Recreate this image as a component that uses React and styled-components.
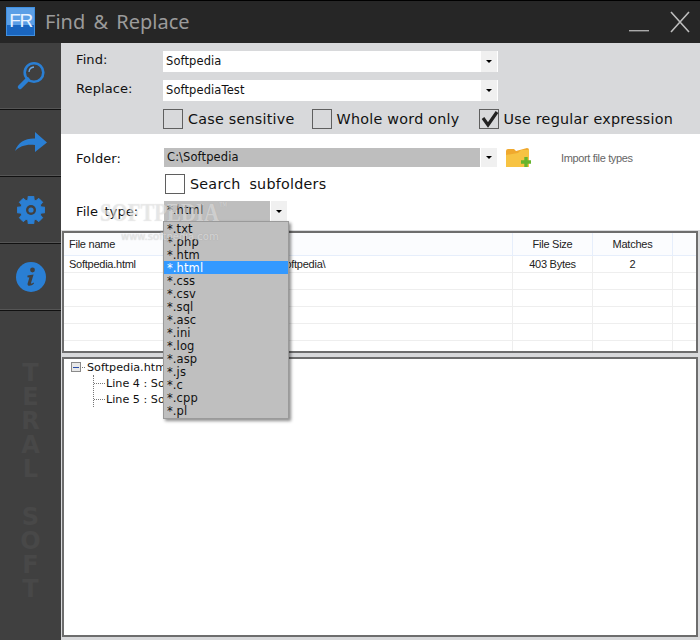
import React from "react";
import styled, { createGlobalStyle } from "styled-components";

const Global = createGlobalStyle`
  html, body { margin: 0; padding: 0; background: #fff; }
  * { box-sizing: border-box; }
`;
const UI = `"DejaVu Sans", Verdana, sans-serif`;
const Win = styled.div`
  position: relative; width: 700px; height: 640px; overflow: hidden;
  display: flex; flex-direction: column; background: #fff; font-family: ${UI}; color: #111;
`;
const TitleBar = styled.header`
  height: 43px; flex: none; background: #262626; border-top: 1px solid #000;
  display: flex; align-items: center; padding: 0 0 1px 6px;
`;
const Logo = styled.div`
  width: 29px; height: 29px; border: 1px solid #3f8fe0; overflow: hidden;
  background: linear-gradient(#5b9fe6 0 62%, #1a66c0 62% 100%);
  color: #e8f2ff; font: 400 19px/25px "Liberation Sans", sans-serif; text-align: center; letter-spacing: -1.5px;
`;
const Title = styled.h1`
  margin: 0 0 0 10px; flex: 1; color: #9b9b9b; font: 400 20px "Noto Sans", sans-serif; word-spacing: 3px;
`;
const WinBtn = styled.button`
  border: 0; background: none; padding: 0; display: block; width: ${p => p.$w}px; height: 24px; margin-right: ${p => p.$mr}px;
  svg { display: block; }
`;
const Body = styled.div`flex: 1; display: flex; min-height: 0;`;
const Sidebar = styled.nav`
  width: 61px; flex: none; background: #404040; display: flex; flex-direction: column; align-items: stretch;
`;
const NavItem = styled.div`
  height: 67px; flex: none; display: flex; align-items: center; justify-content: center;
  border-bottom: 1px solid #111; box-shadow: inset 0 -1px 0 #555;
`;
const Brand = styled.div`
  margin-top: 50px; display: flex; flex-direction: column; align-items: center;
`;
const BrandLetter = styled.span`
  display: block; height: 24px; font: 700 24px/24px "DejaVu Sans", sans-serif; color: #484848;
`;
const Main = styled.main`flex: 1; min-width: 0; display: flex; flex-direction: column;`;
const SearchPanel = styled.section`
  height: 91px; flex: none; background: #d8d9db; padding: 8px 0 0 15px; display: flex; flex-direction: column;
`;
const FieldRow = styled.div`
  display: flex; align-items: center; height: ${p => p.$h || 21}px; margin-bottom: ${p => p.$mb || 0}px;
  margin-left: ${p => p.$ml || 0}px; margin-top: ${p => p.$mt || 0}px;
`;
const Label = styled.label`width: ${p => p.$w || 87}px; flex: none; font-size: 13px; letter-spacing: .1px; word-spacing: 2px; position: relative; top: ${p => p.$top ?? -2}px;`;
const Combo = styled.div`
  width: ${p => p.$w}px; height: ${p => p.$h || 21}px; display: flex; align-items: stretch; flex: none;
  background: ${p => p.$gray ? "transparent" : "#fff"};
`;
const ComboValue = styled.div`
  flex: 1; min-width: 0; padding: 0 3px; font-size: 11.5px; line-height: ${p => p.$lh || 21}px;
  background: ${p => p.$gray ? "#bebebe" : "#fff"}; letter-spacing: 0.1px;
`;
const ComboArrow = styled.div`
  width: 17px; margin-left: ${p => p.$gray ? 1 : 0}px; background: #f0f0f0; border-right: 1px solid #fff;
  display: flex; align-items: center; justify-content: center;
  &::after { content: ""; border: 3px solid transparent; border-top: 3px solid #000; border-bottom: 0; }
`;
const Checks = styled.div`display: flex; align-items: center; height: 20px; margin: 8px 0 0 87px;`;
const Check = styled.span`
  width: 20px; height: 20px; flex: none; border: 1px solid #5f5f5f; margin-right: 5px; position: relative; display: block;
  svg { position: absolute; left: -1px; top: -1px; }
`;
const CheckText = styled.span`font-size: 14.3px; letter-spacing: .25px; margin-right: ${p => p.$mr || 0}px; white-space: nowrap; word-spacing: ${p => p.$ws || 0}px;`;
const FolderPanel = styled.section`height: 96px; flex: none; padding: 14px 0 0 15px; display: flex; flex-direction: column;`;
const ImportLink = styled.span`
  margin-left: 29px; font: 400 11px "Liberation Sans", sans-serif; color: #666; letter-spacing: -.35px;
`;
const FolderIcon = styled.svg`margin-left: 7px; flex: none;`;
const ListArea = styled.div`
  flex: 1; min-height: 0; background: #d8d9db; padding: 1px 2px 3px 1px; display: flex; flex-direction: column; gap: 4px;
`;
const Results = styled.section`
  height: 122px; flex: none; background: #fff; border: 2px solid #6d6d6d; overflow: hidden;
  font: 400 11px "Liberation Sans", sans-serif; color: #222; letter-spacing: -.25px;
`;
const Row = styled.div`
  display: grid; grid-template-columns: 160px 289px 80px 80px 1fr; height: ${p => p.$h || 17}px;
  border-bottom: 1px solid ${p => p.$head ? "#e6eefb" : "#eeeeee"};
  background: ${p => p.$head ? "#fbfcfe" : "#fff"};
`;
const Cell = styled.div`
  border-right: 1px solid ${p => p.$head ? "#e6eefb" : "#eeeeee"}; padding: 0 0 0 ${p => p.$pl || 0}px; white-space: nowrap; overflow: hidden;
  line-height: ${p => p.$h || 16}px; text-align: ${p => p.$center ? "center" : "left"};
  &:last-child { border-right: 0; }
`;
const Tree = styled.section`
  flex: 1; min-height: 0; background: #fff; border: 2px solid #6d6d6d;
  padding: 0 0 0 7px; font-size: 11.2px;
`;
const TreeRoot = styled.div`display: flex; align-items: center; height: 16px;`;
const Expander = styled.span`
  width: 10px; height: 10px; border: 1px solid #8a8a8a; background: #e8e8e8; flex: none; display: flex; align-items: center; justify-content: center;
  &::after { content: ""; width: 6px; height: 1px; background: #2b4fa8; }
`;
const TreeDots = styled.span`width: 3px; border-top: 1px dotted #777; margin: 0 2px 0 1px;`;
const TreeChildren = styled.div`margin-left: 22px; border-left: 1px dotted #777; height: 32px;`;
const TreeChild = styled.div`
  display: flex; align-items: center; height: 16px; white-space: pre;
  &::before { content: ""; width: 11px; margin-right: 1px; border-top: 1px dotted #777; }
`;
const Dropdown = styled.ul`
  position: absolute; left: 163px; top: 221px; width: 126px; height: 198px; margin: 0; padding: 0; list-style: none;
  background: #bfbfbf; border: 1px solid #9a9a9a; box-shadow: 2px 2px 3px rgba(0,0,0,.45); z-index: 5;
`;
const DropItem = styled.li`
  height: 13px; line-height: 15px; padding-left: 3px; font-size: 11.5px; letter-spacing: .1px;
  background: ${p => p.$on ? "#3399ff" : "transparent"}; color: ${p => p.$on ? "#fff" : "#111"};
`;
const Mark = styled.div`
  position: absolute; left: 100px; top: 198px; z-index: 6; font: 700 26px "Liberation Serif", serif;
  color: rgba(255,255,255,.42); text-shadow: 0 0 1px rgba(150,150,150,.4); white-space: nowrap; pointer-events: none;
  transform: scaleX(.8); transform-origin: left center;
`;
const MarkTm = styled.span`font-size: 10px; vertical-align: 12px; font-weight: 400;`;
const MarkUrl = styled.div`
  position: absolute; left: 121px; top: 231px; z-index: 6; font: 400 10px "DejaVu Sans", sans-serif;
  color: rgba(255,255,255,.5); text-shadow: 0 0 1px rgba(130,130,130,.5); white-space: nowrap; pointer-events: none;
`;

const Blue = "#2a7fd4";
const Search = () => (
  <svg width="30" height="30" viewBox="0 0 30 30" fill="none">
    <circle cx="18" cy="11.5" r="9.3" stroke={Blue} strokeWidth="2.6" />
    <path d="M11.5 18.5 L4 26" stroke={Blue} strokeWidth="4.5" strokeLinecap="round" />
    <path d="M13 11a5.5 5.5 0 0 1 5-5" stroke="#6aa9e6" strokeWidth="1.3" />
  </svg>
);
const Arrow = () => (
  <svg width="34" height="24" viewBox="0 0 34 24">
    <path d="M1 20 C4 11 12 7 21 7.5 L21 1 L33 11.5 L21 21 L21 14 C12 13 6 15 1 20Z" fill={Blue} />
  </svg>
);
const gearPath = (() => {
  const pts = [];
  for (let i = 0; i < 8; i++) {
    const a = (i * Math.PI) / 4;
    [[-0.3, 10.5], [-0.2, 14], [0.2, 14], [0.3, 10.5]].forEach(([d, r]) =>
      pts.push(`${(14 + r * Math.sin(a + d)).toFixed(2)} ${(14 - r * Math.cos(a + d)).toFixed(2)}`));
  }
  return "M" + pts.join(" L") + "Z";
})();
const Gear = () => (
  <svg width="28" height="28" viewBox="0 0 28 28">
    <path d={gearPath} fill={Blue} stroke={Blue} strokeLinejoin="round" />
    <circle cx="14" cy="14" r="5" fill="#404040" />
    <circle cx="14" cy="14" r="2.6" fill={Blue} />
  </svg>
);
const Info = () => (
  <svg width="30" height="30" viewBox="0 0 30 30">
    <circle cx="15" cy="15" r="15" fill={Blue} />
    <circle cx="16.5" cy="8" r="2.4" fill="#404040" />
    <path d="M11.5 13.5 L17.6 12.5 L15 21 C14.8 22 15.5 22 17.5 20.5 L18 21.5 C15.5 24 11 25 11.6 21.5 L13.4 15.5 L11.4 15.2Z" fill="#404040" />
  </svg>
);
const types = ["txt","php","htm","html","css","csv","sql","asc","ini","log","asp","js","c","cpp","pl"];
const brand = ["T","E","R","A","L","\u00a0","S","O","F","T"];

export default function App() {
  return (
    <Win>
      <Global />
      <TitleBar>
        <Logo>FR</Logo>
        <Title>Find &amp; Replace</Title>
        <WinBtn $w={20} $mr={21} aria-label="Minimize">
          <svg width="20" height="24"><rect x="0" y="20" width="20" height="1.4" fill="#aaa" /></svg>
        </WinBtn>
        <WinBtn $w={20} $mr={10} aria-label="Close">
          <svg width="20" height="24"><path d="M1 2 L19 22 M19 2 L1 22" stroke="#bdbdbd" strokeWidth="1.6" /></svg>
        </WinBtn>
      </TitleBar>
      <Body>
        <Sidebar>
          <NavItem><Search /></NavItem>
          <NavItem><Arrow /></NavItem>
          <NavItem><Gear /></NavItem>
          <NavItem><Info /></NavItem>
          <Brand>{brand.map((c, i) => <BrandLetter key={i}>{c}</BrandLetter>)}</Brand>
        </Sidebar>
        <Main>
          <SearchPanel>
            <FieldRow $mb={8}>
              <Label>Find:</Label>
              <Combo $w={335}><ComboValue>Softpedia</ComboValue><ComboArrow /></Combo>
            </FieldRow>
            <FieldRow>
              <Label>Replace:</Label>
              <Combo $w={335}><ComboValue>SoftpediaTest</ComboValue><ComboArrow /></Combo>
            </FieldRow>
            <Checks>
              <Check /><CheckText $mr={17}>Case sensitive</CheckText>
              <Check /><CheckText $mr={19}>Whole word only</CheckText>
              <Check>
                <svg width="20" height="20" viewBox="0 0 20 20"><path d="M4 9 L9 16 L18 3" fill="none" stroke="#222" strokeWidth="3.2" /></svg>
              </Check>
              <CheckText>Use regular expression</CheckText>
            </Checks>
          </SearchPanel>
          <FolderPanel>
            <FieldRow $h={19}>
              <Label $w={88} $top={1}>Folder:</Label>
              <Combo $w={334} $h={19} $gray><ComboValue $gray $lh={18}>C:\Softpedia</ComboValue><ComboArrow $gray /></Combo>
              <FolderIcon width="27" height="22" viewBox="0 0 27 22">
                <path d="M1 4 Q1 2 3 2 L9 2 L11 4 L22 1 Q24 1 24 3 L24 20 L1 20Z" fill="#f0a92e" />
                <path d="M1 8 L13 6 L16 3 L24 3 L24 20 L1 20Z" fill="#f7c343" />
                <path d="M16 15 H26 M21 10 V20" stroke="#66b52d" strokeWidth="3.4" />
              </FolderIcon>
              <ImportLink>Import file types</ImportLink>
            </FieldRow>
            <FieldRow $h={20} $ml={89} $mt={7}>
              <Check /><CheckText $ws={4}>Search subfolders</CheckText>
            </FieldRow>
            <FieldRow $h={20} $mt={7}>
              <Label $w={88} $top={0}>File type:</Label>
              <Combo $w={124} $h={20} $gray><ComboValue $gray $lh={19}>*.html</ComboValue><ComboArrow $gray /></Combo>
            </FieldRow>
          </FolderPanel>
          <ListArea>
            <Results>
              <Row $head $h={23}>
                <Cell $head $pl={5} $h={22}>File name</Cell>
                <Cell $head $pl={20} $h={22}>Location</Cell>
                <Cell $head $center $h={22}>File Size</Cell>
                <Cell $head $center $h={22}>Matches</Cell>
                <Cell $head />
              </Row>
              <Row>
                <Cell $pl={5}>Softpedia.html</Cell>
                <Cell $pl={41}>C:\Softpedia\</Cell>
                <Cell $center>403 Bytes</Cell>
                <Cell $center>2</Cell>
                <Cell />
              </Row>
              {[0, 1, 2, 3, 4].map(i => (
                <Row key={i}><Cell /><Cell /><Cell /><Cell /><Cell /></Row>
              ))}
            </Results>
            <Tree>
              <TreeRoot>
                <Expander /><TreeDots />
                <span>Softpedia.html</span>
              </TreeRoot>
              <TreeChildren>
                <TreeChild>Line 4 : Softpedia</TreeChild>
                <TreeChild>Line 5 : Softpedia</TreeChild>
              </TreeChildren>
            </Tree>
          </ListArea>
        </Main>
      </Body>
      <Dropdown>
        {types.map(t => <DropItem key={t} $on={t === "html"}>*.{t}</DropItem>)}
      </Dropdown>
      <Mark>SOFTPEDIA<MarkTm>™</MarkTm></Mark>
      <MarkUrl>www.softpedia.com</MarkUrl>
    </Win>
  );
}
